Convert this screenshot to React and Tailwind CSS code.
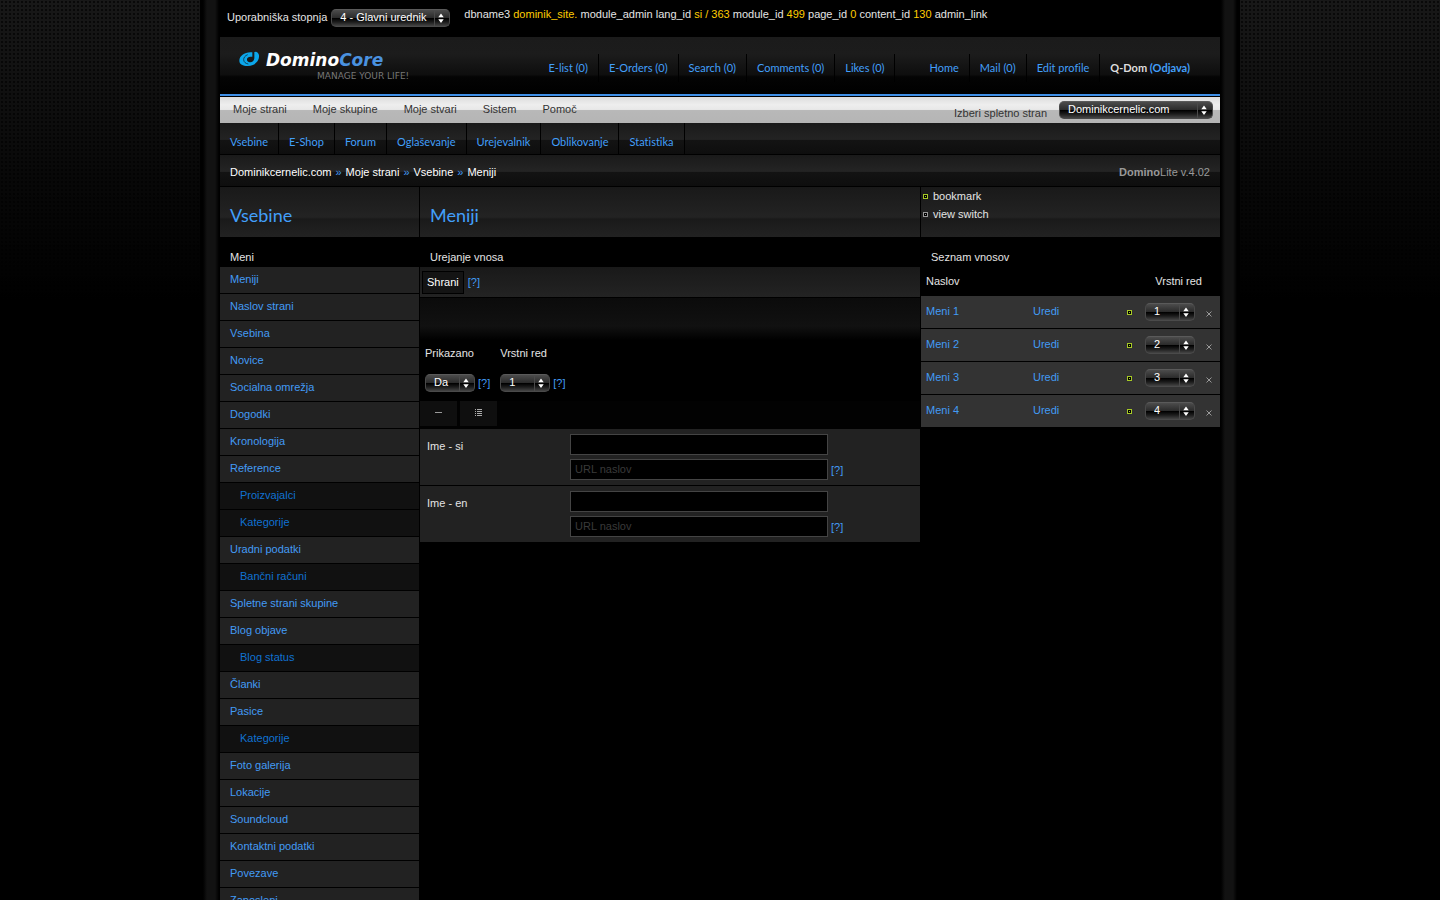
import React from "react";

const accountLinks = ["Home", "Mail (0)", "Edit profile"];
const counters = ["E-list (0)", "E-Orders (0)", "Search (0)", "Comments (0)", "Likes (0)"];
const mainMenu = ["Moje strani", "Moje skupine", "Moje stvari", "Sistem", "Pomoč"];
const subMenu = ["Vsebine", "E-Shop", "Forum", "Oglaševanje", "Urejevalnik", "Oblikovanje", "Statistika"];
const crumbs = ["Dominikcernelic.com", "Moje strani", "Vsebine", "Meniji"];

const sideMenu = [
    { label: "Meniji" },
    { label: "Naslov strani" },
    { label: "Vsebina" },
    { label: "Novice" },
    { label: "Socialna omrežja" },
    { label: "Dogodki" },
    { label: "Kronologija" },
    { label: "Reference" },
    { label: "Proizvajalci", sub: true },
    { label: "Kategorije", sub: true },
    { label: "Uradni podatki" },
    { label: "Bančni računi", sub: true },
    { label: "Spletne strani skupine" },
    { label: "Blog objave" },
    { label: "Blog status", sub: true },
    { label: "Članki" },
    { label: "Pasice" },
    { label: "Kategorije", sub: true },
    { label: "Foto galerija" },
    { label: "Lokacije" },
    { label: "Soundcloud" },
    { label: "Kontaktni podatki" },
    { label: "Povezave" },
    { label: "Zaposleni" },
];

const trebuchet = "font-['Trebuchet_MS',Lato,sans-serif] [font-variant-ligatures:none]";

const Select = ({ id, label, options, className }) => (
    <span className={`relative inline-block h-[18px] ${className}`}>
        <select
            id={id}
            aria-label={label}
            className="block h-full w-full appearance-none rounded-[5px] border border-[#4a4a4a] border-t-[#5a5a5a] bg-[linear-gradient(#4c4c4c,#2a2a2a_50%,#000_52%,#1c1c1c_75%,#444)] pb-[2px] pl-2 pr-4 text-[11px] leading-[14px] text-white"
        >
            {options.map((o) => (
                <option key={o}>{o}</option>
            ))}
        </select>
        <svg
            className="pointer-events-none absolute right-1 top-0 h-[18px] w-3"
            viewBox="0 0 12 18"
            aria-hidden="true"
        >
            <path d="M0.5 1V17" stroke="#4a4a4a" />
            <path d="M7 4.5L9.7 8.3H4.3Z M7 14L9.7 10.2H4.3Z" fill="#fff" />
        </svg>
    </span>
);

const Dot = ({ color = "#a6c926" }) => (
    <svg className="block h-[5px] w-[5px] shrink-0" viewBox="0 0 5 5" aria-hidden="true" shapeRendering="crispEdges">
        <path d="M0.5 0.5H4.5V4.5H0.5Z" fill="#000" stroke={color} />
        <path d="M2 2H3V3H2Z" fill={color} />
    </svg>
);

const Help = () => (
    <a href="#help" className="text-[#429bf5]">
        [?]
    </a>
);

const Logo = () => (
    <a href="#home" className="flex gap-[6px] pl-[18px] pt-[13px]">
        <svg className="mt-px h-[16px] w-[22px]" viewBox="-3 -2 66 48" aria-hidden="true">
            <path
                d="M34 2C16 3 1 13 1 27C1 38 12 43 26 43C38 43 47 39 50 34C57 29 61 20 60 11C59 5 56 1 51 0L46 1V20C45 29 37 34 29 31C22 28 22 19 30 16C33 15 37 15 40 15V2Z"
                fill="#0ba6ea"
            />
            <path
                d="M26 9C18 12 14 18 14 24C14 31 20 36 28 37"
                fill="none"
                stroke="#141414"
                strokeWidth="2"
            />
        </svg>
        <span className="flex flex-col items-end font-['DejaVu_Sans',sans-serif]">
            <span className="pr-[26px] text-[17px] font-bold italic leading-5 text-white">
                Domino<span className="text-[#4a92e0]">Core</span>
            </span>
            <span className="text-[9px] leading-3 text-[#777]">MANAGE YOUR LIFE!</span>
        </span>
    </a>
);

const Header = () => (
    <header className="flex h-[59px] items-start justify-between border-b-2 border-[#3f8fe6] bg-[linear-gradient(#1b1b1b,#1c1c1c_30%,#0e0e0e_66%,#040404_70%,#000)]">
        <Logo />
        <nav className={`flex pr-5 pt-[17px] text-[11px] leading-[28px] text-[#429ffa] ${trebuchet}`}>
            {counters.map((c) => (
                <a key={c} href="#counter" className="border-r border-black px-[10px]">
                    {c}
                </a>
            ))}
            <span className="w-6" />
            {accountLinks.map((c) => (
                <a key={c} href="#account" className="border-r border-black px-[10px]">
                    {c}
                </a>
            ))}
            <span className="px-[10px] font-bold text-[#ddd]">
                Q-Dom{" "}
                <a href="#logout" className="text-[#429ffa]">
                    (Odjava)
                </a>
            </span>
        </nav>
    </header>
);

const Sidebar = () => (
    <nav className="border-r border-black">
        <h2 className="h-[30px] bg-black pl-[10px] pt-3 leading-4 text-[#e4e4e4]">Meni</h2>
        <ul>
            {sideMenu.map((item, i) => (
                <li key={i} className="border-b border-black">
                    <a
                        href="#module"
                        className={
                            item.sub
                                ? "block h-[26px] bg-[#111] pl-5 leading-[25px] text-[#1072d2]"
                                : "block h-[26px] bg-[#222] pl-[10px] leading-[25px] text-[#429bf5]"
                        }
                    >
                        {item.label}
                    </a>
                </li>
            ))}
        </ul>
    </nav>
);

const LanguageRow = ({ lang }) => (
    <div className="flex border-b border-black bg-[#222] pb-[5px] pl-[7px] pt-[5px]">
        <label htmlFor={`name-${lang}`} className="w-[143px] pt-1 leading-4 text-[#e4e4e4]">
            Ime - {lang}
        </label>
        <div className="flex flex-col gap-1">
            <input id={`name-${lang}`} className="h-[21px] w-[258px] border border-[#444] bg-black px-1 text-white" />
            <div className="flex items-center gap-[3px]">
                <input
                    aria-label={`URL naslov ${lang}`}
                    placeholder="URL naslov"
                    className="h-[21px] w-[258px] border border-[#444] bg-black px-1 pb-px text-white placeholder:text-[#3a3a3a]"
                />
                <Help />
            </div>
        </div>
    </div>
);

const Editor = () => (
    <main>
        <h2 className="h-[30px] pl-[10px] pt-3 leading-4 text-[#e4e4e4]">Urejanje vnosa</h2>
        <div className="flex h-[31px] items-center gap-1 border-b border-black bg-[linear-gradient(#191919,#232323)] pl-[2px]">
            <button className="h-[23px] border border-black bg-[#141414] px-1 text-white">Shrani</button>
            <Help />
        </div>
        <div className="h-[47px] bg-[linear-gradient(#0b0b0b,#111_60%,#000_90%)]" />
        <div className="flex gap-[10px] pl-[5px] leading-4 text-[#e4e4e4]">
            <div className="flex flex-col gap-[13px]">
                <label htmlFor="visible">Prikazano</label>
                <div className="flex items-center gap-[3px]">
                    <Select id="visible" options={["Da", "Ne"]} className="w-[50px]" />
                    <Help />
                </div>
            </div>
            <div className="flex flex-col gap-[13px]">
                <label htmlFor="order">Vrstni red</label>
                <div className="flex items-center gap-[3px]">
                    <Select id="order" options={["1", "2", "3", "4"]} className="w-[50px]" />
                    <Help />
                </div>
            </div>
        </div>
        <div className="mt-[9px] flex gap-[3px] bg-[#020202] pb-[3px]">
            <button aria-label="Strni" className="flex h-[25px] w-[37px] items-center justify-center bg-[#0f0f0f]">
                <svg className="h-[9px] w-[7px]" viewBox="0 0 7 9" aria-hidden="true">
                    <path d="M0 3.5H7" stroke="#999" />
                </svg>
            </button>
            <button aria-label="Seznam" className="flex h-[25px] w-[37px] items-center justify-center bg-[#0f0f0f] pb-[2px]">
                <svg className="h-[7px] w-[7px]" viewBox="0 0 7 7" aria-hidden="true">
                    <path d="M0 0.5H1M2 0.5H7M0 2.5H1M2 2.5H7M0 4.5H1M2 4.5H7M0 6.5H1M2 6.5H7" stroke="#aaa" />
                </svg>
            </button>
        </div>
        <LanguageRow lang="si" />
        <LanguageRow lang="en" />
    </main>
);

const Entries = () => (
    <aside className="border-l border-black">
        <h2 className="h-[30px] pl-[10px] pt-3 leading-4 text-[#e4e4e4]">Seznam vnosov</h2>
        <table className="w-full table-fixed border-separate border-spacing-0 text-left">
            <colgroup>
                <col className="w-[107px]" />
                <col />
                <col className="w-[18px]" />
                <col className="w-[61px]" />
                <col className="w-[14px]" />
            </colgroup>
            <thead>
                <tr className="h-[29px] text-[#e4e4e4]">
                    <th className="pb-px pl-[5px] font-normal">Naslov</th>
                    <th colSpan={4} className="pb-px pr-[18px] text-right font-normal">
                        Vrstni red
                    </th>
                </tr>
            </thead>
            <tbody>
                {["1", "2", "3", "4"].map((n) => (
                    <tr key={n} className="h-[33px] bg-[#333] [&>td]:border-b [&>td]:border-black">
                        <td className="pb-[2px] pl-[5px]">
                            <a href="#entry" className="text-[#429bf5]">
                                Meni {n}
                            </a>
                        </td>
                        <td className="pb-[2px] pl-[5px]">
                            <a href="#edit" className="text-[#429bf5]">
                                Uredi
                            </a>
                        </td>
                        <td className="pt-px">
                            <Dot />
                        </td>
                        <td>
                            <Select
                                label={`Vrstni red ${n}`}
                                options={[n, ...["1", "2", "3", "4"].filter((o) => o !== n)]}
                                className="w-[50px] align-middle"
                            />
                        </td>
                        <td>
                            <button aria-label="Izbriši" className="block pt-1">
                                <svg className="block h-[6px] w-[6px]" viewBox="0 0 6 6" aria-hidden="true">
                                    <path d="M0.5 0.5L5.5 5.5M5.5 0.5L0.5 5.5" stroke="#999" />
                                </svg>
                            </button>
                        </td>
                    </tr>
                ))}
            </tbody>
        </table>
    </aside>
);

const App = () => {
    return (
        <div className="min-h-screen bg-black bg-[linear-gradient(#0000,#000000b0_180px,#000_300px),radial-gradient(circle,#060606_20%,#181818_50%)] bg-[size:auto,4px_4px] font-['Liberation_Sans',Arial,sans-serif] text-[11px] leading-4">
            <div className="mx-auto min-h-screen max-w-[1040px] bg-black bg-[linear-gradient(90deg,#000_3px,#121212_7px,#121212_15px,#000_19px,#000_1021px,#121212_1025px,#121212_1033px,#000_1037px)] px-5">
                <div className="flex h-[37px] gap-[14px] pl-[7px] text-[#e4e4e4]">
                    <div className="flex items-center gap-1 pb-[2px]">
                        <label htmlFor="level" className="pb-[2px]">
                            Uporabniška stopnja
                        </label>
                        <Select id="level" options={["4 - Glavni urednik"]} className="w-[119px]" />
                    </div>
                    <p className="pt-[6px]">
                        dbname3 <span className="text-[#fc0]">dominik_site.</span> module_admin lang_id{" "}
                        <span className="text-[#fc0]">si / 363</span> module_id <span className="text-[#fc0]">499</span>{" "}
                        page_id <span className="text-[#fc0]">0</span> content_id{" "}
                        <span className="text-[#fc0]">130</span> admin_link
                    </p>
                </div>

                <Header />

                <div className="mt-px flex h-[26px] items-center justify-between bg-[linear-gradient(#ddd,#eee_30%,#e8e8e8_48%,#b8b8b8_52%,#b5b5b5)] pr-[7px] text-[#333]">
                    <nav className="flex pb-[2px]">
                        {mainMenu.map((m) => (
                            <a key={m} href="#menu" className="px-[13px]">
                                {m}
                            </a>
                        ))}
                    </nav>
                    <div className="flex items-center gap-3">
                        <label htmlFor="site" className="pt-[5px]">
                            Izberi spletno stran
                        </label>
                        <Select id="site" options={["Dominikcernelic.com"]} className="w-[154px]" />
                    </div>
                </div>

                <nav
                    className={`flex h-8 border-b border-black bg-[linear-gradient(#1a1a1a,#232323_53%,#131313_55%,#0e0e0e)] leading-[37px] text-[#429ffa] ${trebuchet}`}
                >
                    {subMenu.map((m) => (
                        <a key={m} href="#sub" className="border-r border-black px-[10px]">
                            {m}
                        </a>
                    ))}
                </nav>

                <div className="flex h-8 items-center justify-between border-b border-black bg-[linear-gradient(#1a1a1a,#242424_53%,#131313_55%,#0e0e0e)] px-[10px] pt-[3px] text-white">
                    <div className="flex gap-1">
                        {crumbs.map((c, i) => (
                            <React.Fragment key={c}>
                                {i > 0 && <span className="text-[#429bf5]">»</span>}
                                <a href="#crumb">{c}</a>
                            </React.Fragment>
                        ))}
                    </div>
                    <p className="text-[#999]">
                        <b>Domino</b>Lite v.4.02
                    </p>
                </div>

                <div className="grid h-[50px] grid-cols-[200px_1fr_300px] bg-[linear-gradient(#191919,#232323_60%,#1a1a1a_64%,#222)]">
                    <h1 className={`border-r border-black pl-[10px] pt-4 text-[18px] leading-6 text-[#429ffa] ${trebuchet}`}>
                        Vsebine
                    </h1>
                    <h1 className={`pl-[10px] pt-4 text-[18px] leading-6 text-[#429ffa] ${trebuchet}`}>Meniji</h1>
                    <div className="border-l border-black pl-[2px] leading-[18px] text-[#e4e4e4]">
                        <a href="#bookmark" className="flex items-center gap-[5px]">
                            <Dot />
                            bookmark
                        </a>
                        <a href="#view" className="flex items-center gap-[5px]">
                            <Dot color="#999" />
                            view switch
                        </a>
                    </div>
                </div>

                <div className="grid grid-cols-[200px_1fr_300px] bg-black">
                    <Sidebar />
                    <Editor />
                    <Entries />
                </div>
            </div>
        </div>
    );
};

export default App;
